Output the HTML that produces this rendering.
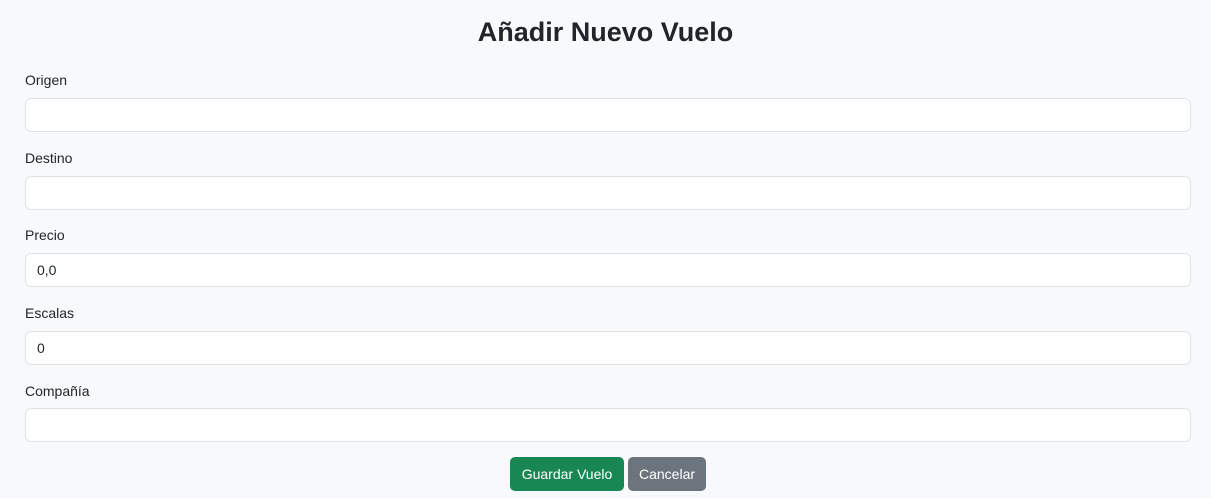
<!DOCTYPE html>
<html><head><meta charset="utf-8"><style>
html,body{margin:0;padding:0;background:#f8f9fa;width:1211px;height:498px;overflow:hidden;font-family:"Liberation Sans",sans-serif;color:#212529}
h1{position:absolute;top:12px;left:0;width:1211px;text-align:center;margin:0;font-size:27px;font-weight:bold;line-height:40px}
.l{position:absolute;left:25px;font-size:14px;line-height:18px}
.i{position:absolute;left:25px;width:1164px;height:32px;background:#fff;border:1px solid #dee2e6;border-radius:6px;font-size:14px;line-height:32px;box-sizing:content-box}
.i span{padding-left:11px}
.b{position:absolute;top:457px;height:34px;border-radius:5px;color:#fff;font-size:14px;line-height:34px;text-align:center}
</style></head><body>
<h1>Añadir Nuevo Vuelo</h1>
<div class="l" style="top:71px">Origen</div><div class="i" style="top:98px"></div>
<div class="l" style="top:149px">Destino</div><div class="i" style="top:176px"></div>
<div class="l" style="top:226px">Precio</div><div class="i" style="top:253px"><span>0,0</span></div>
<div class="l" style="top:304px">Escalas</div><div class="i" style="top:331px"><span>0</span></div>
<div class="l" style="top:382px">Compañía</div><div class="i" style="top:408px"></div>
<div class="b" style="left:510px;width:114px;background:#198754">Guardar Vuelo</div>
<div class="b" style="left:628px;width:78px;background:#6c757d">Cancelar</div>
</body></html>
